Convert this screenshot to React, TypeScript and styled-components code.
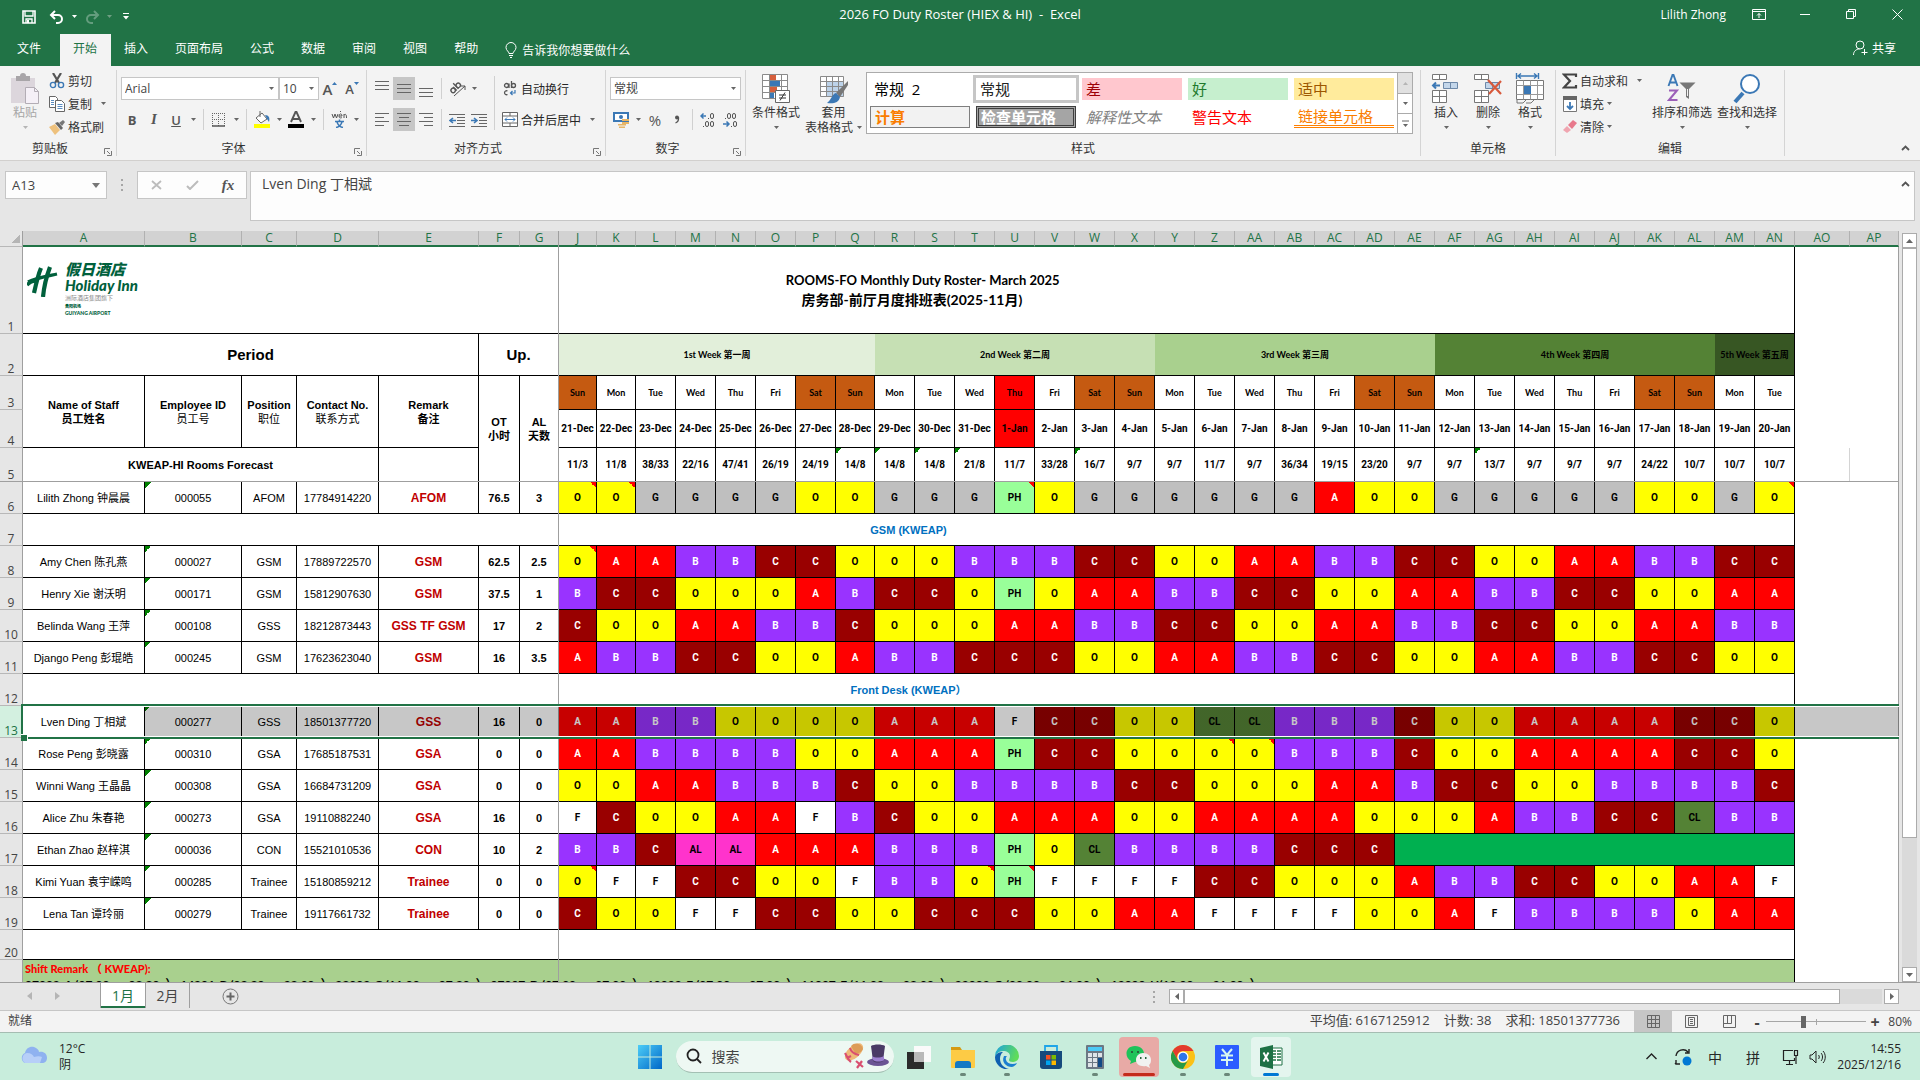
import React from "react";
import styled, { createGlobalStyle, css } from "styled-components";

const UI = '"Open Sans", "Noto Sans CJK SC", sans-serif';
const SHEET = '"Liberation Sans", "Noto Sans CJK SC", sans-serif';
const ROSTER = 'Lato, "Noto Sans CJK SC", sans-serif';
const SHIFT = 'Roboto, "Noto Sans CJK SC", sans-serif';
const GREEN = "#217346";

const GlobalStyle = createGlobalStyle`
  *, *::before, *::after { box-sizing: border-box; }
  body { margin: 0; overflow: hidden; font-family: ${UI}; font-size: 12px; color: #262626; }
  button, input, select, textarea { font: inherit; color: inherit; margin: 0; padding: 0; border: 0; background: none; border-radius: 0; }
  button { display: inline-flex; align-items: center; justify-content: center; white-space: nowrap; }
  svg { display: block; flex: none; }
`;

const Screen = styled.div`
  display: flex;
  flex-direction: column;
  height: 100vh;
  background: #e6e6e6;
`;

/* ---------- title bar and tabs ---------- */

const TitleBar = styled.header`
  display: grid;
  grid-template-columns: 1fr auto 1fr;
  align-items: center;
  height: 34px;
  padding-bottom: 6px;
  background: ${GREEN};
  color: #fff;
`;
const QuickAccess = styled.div`
  display: flex;
  align-items: center;
  padding: 5px 0 0 18px;
`;
const QuickButton = styled.button<{ $w: number; $faded?: boolean }>`
  width: ${(p) => p.$w}px;
  height: 22px;
  opacity: ${(p) => (p.$faded ? 0.3 : 1)};
`;
const DocTitle = styled.h1`
  margin: 0;
  font-size: 13px;
  font-weight: 400;
  white-space: pre;
`;
const WindowControls = styled.div`
  display: flex;
  align-items: center;
  justify-content: flex-end;
`;
const Account = styled.button`
  margin-right: 10px;
`;
const WindowButton = styled.button`
  width: 46px;
  height: 28px;
`;
const TabBar = styled.nav`
  display: flex;
  align-items: stretch;
  height: 32px;
  background: ${GREEN};
  color: #fff;
`;
const Tab = styled.button<{ $active?: boolean; $file?: boolean }>`
  padding: ${(p) => (p.$file ? "0 19px 2px 17px" : "0 14px 2px 13px")};
  line-height: 16px;
  ${(p) => p.$active && css`background: #f3f3f3; color: ${GREEN};`}
`;
const TellMe = styled.button`
  gap: 5px;
  margin-left: 13px;
`;
const Share = styled.button`
  gap: 4px;
  margin-left: auto;
  padding: 0 24px 4px 0;
`;

/* ---------- ribbon ---------- */

const Ribbon = styled.section`
  display: flex;
  padding: 4px 0;
  background: #f3f3f3;
  border-bottom: 1px solid #d2d0ce;
`;
const Group = styled.div<{ $w: number }>`
  display: flex;
  flex-direction: column;
  width: ${(p) => p.$w}px;
  height: 86px;
  border-right: 1px solid #d4d4d4;
`;
const GroupBody = styled.div<{ $pad?: number }>`
  display: flex;
  height: 72px;
  padding-left: ${(p) => p.$pad ?? 4}px;
`;
const GroupFooter = styled.div`
  display: flex;
  align-items: center;
  height: 14px;
  line-height: 14px;
  text-align: center;
  color: #333;
`;
const GroupLabel = styled.span`
  flex: 1;
`;
const Launcher = styled.button`
  width: 16px;
  height: 14px;
  align-items: flex-end;
`;
const ToolRows = styled.div`
  display: flex;
  flex-direction: column;
  gap: 8px;
  padding-top: 7px;
`;
const ToolRow = styled.div`
  display: flex;
  align-items: center;
  height: 23px;
`;
const Tool = styled.button<{ $w?: number; $on?: boolean }>`
  width: ${(p) => p.$w ?? 22}px;
  height: 23px;
  background: ${(p) => (p.$on ? "#c6c6c6" : "transparent")};
  color: #555;
`;
const TextTool = styled.button`
  height: 23px;
  justify-content: flex-start;
`;
const IconSlot = styled.span<{ $w?: number }>`
  display: flex;
  align-items: center;
  justify-content: center;
  width: ${(p) => p.$w ?? 22}px;
`;
const ArrowSlot = styled.span`
  display: flex;
  padding-left: 9px;
`;
const Sep = styled.i<{ $h?: number }>`
  width: 1px;
  height: ${(p) => p.$h ?? 21}px;
  margin: 0 4px;
  background: #d0d0d0;
`;
const TallSep = styled(Sep)`
  margin-top: 6px;
`;
const SmallTools = styled.div`
  display: flex;
  flex-direction: column;
  align-items: flex-start;
  gap: 2px;
`;
const SmallTool = styled.button`
  height: 21px;
  color: #333;
`;
const BigTool = styled.button<{ $w: number; $disabled?: boolean }>`
  flex-direction: column;
  justify-content: flex-start;
  width: ${(p) => p.$w}px;
  padding-top: 3px;
  color: ${(p) => (p.$disabled ? "#a6a6a6" : "#333")};
`;
const BigIcon = styled.span`
  display: flex;
  align-items: flex-start;
  height: 32px;
`;
const BigLine = styled.span`
  display: flex;
  align-items: center;
  gap: 4px;
  height: 15px;
  line-height: 15px;
`;
const ComboBox = styled.label<{ $w: number }>`
  position: relative;
  display: flex;
  align-items: center;
  width: ${(p) => p.$w}px;
  height: 23px;
  background: #fff;
  border: 1px solid #c6c6c6;
  select {
    appearance: none;
    width: 100%;
    padding-left: 3px;
    color: #444;
    outline: 0;
  }
  svg {
    position: absolute;
    right: 4px;
    pointer-events: none;
  }
`;
const Glyph = styled.span<{ $size?: number; $weight?: number; $style?: "bold" | "italic" | "underline" }>`
  font-size: ${(p) => p.$size ?? 13}px;
  font-weight: ${(p) => p.$weight ?? 700};
  font-style: ${(p) => (p.$style === "italic" ? "italic" : "normal")};
  font-family: ${(p) => (p.$style === "italic" ? '"Liberation Serif", serif' : UI)};
  text-decoration: ${(p) => (p.$style === "underline" ? "underline" : "none")};
`;
const Gallery = styled.div`
  display: flex;
  align-self: flex-start;
  height: 62px;
  margin: 2px 0 0 2px;
  border: 1px solid #ababab;
  background: #fff;
`;
const GalleryGrid = styled.div`
  display: grid;
  grid-template-columns: repeat(5, 100px);
  grid-auto-rows: 22px;
  gap: 6px;
  padding: 5px 3px;
`;
const StyleChip = styled.button<{ $fg: string; $bg?: string; $variant?: string }>`
  justify-content: flex-start;
  padding-left: 4px;
  font-size: 15px;
  line-height: 18px;
  color: ${(p) => p.$fg};
  background: ${(p) => p.$bg ?? "transparent"};
  ${(p) => p.$variant === "selected" && css`outline: 3px solid #c6c6c6;`}
  ${(p) => p.$variant === "calc" && css`border: 1px solid #7f7f7f; font-weight: 700;`}
  ${(p) => p.$variant === "check" && css`border: 3px double #3f3f3f; font-weight: 700; padding-left: 2px;`}
  ${(p) => p.$variant === "note" && css`font-style: italic;`}
  ${(p) => p.$variant === "link" && css`border-bottom: 3px double #ff8001;`}
`;
const GallerySteps = styled.div`
  display: grid;
  grid-template-rows: 1fr 1fr 1fr;
  width: 15px;
  border-left: 1px solid #ababab;
`;
const StepButton = styled.button<{ $off?: boolean }>`
  background: ${(p) => (p.$off ? "#e1e1e1" : "#fff")};
  & + & { border-top: 1px solid #ababab; }
`;
const Collapse = styled.button`
  align-self: flex-end;
  margin-left: auto;
  width: 30px;
  height: 16px;
`;

/* ---------- formula bar ---------- */

const FormulaBar = styled.section`
  display: flex;
  align-items: flex-start;
  padding: 10px 5px;
  background: #e6e6e6;
`;
const NameBox = styled.label`
  position: relative;
  display: flex;
  align-items: center;
  width: 102px;
  height: 28px;
  background: #fdfdfd;
  border: 1px solid #c6c6c6;
  input { width: 80px; padding-left: 6px; font-size: 13px; color: #444; }
  svg { position: absolute; right: 6px; }
`;
const Grip = styled.span`
  display: grid;
  gap: 3px;
  i { width: 2px; height: 2px; background: #a6a6a6; }
`;
const GripSlot = styled.span`
  display: flex;
  align-items: center;
  justify-content: center;
  width: 30px;
  height: 28px;
`;
const EntryButtons = styled.div`
  display: grid;
  grid-template-columns: repeat(3, 36px);
  width: 110px;
  height: 28px;
  margin-right: 3px;
  background: #fdfdfd;
  border: 1px solid #c6c6c6;
  color: #555;
`;
const FormulaField = styled.div`
  display: flex;
  flex: 1;
  height: 50px;
  background: #fdfdfd;
  border: 1px solid #c6c6c6;
  textarea {
    flex: 1;
    resize: none;
    outline: 0;
    padding: 2px 11px;
    font-size: 14px;
    line-height: 20px;
    color: #444;
  }
  button { width: 18px; height: 24px; }
`;

/* ---------- worksheet ---------- */

const SheetArea = styled.main`
  display: flex;
  flex: 1;
  min-height: 0;
`;
const SheetView = styled.div`
  position: relative;
  flex: 1;
  overflow: hidden;
  background: #fff;
`;
const FreezeColumn = styled.i`
  position: absolute;
  top: 0;
  bottom: 0;
  left: 558px;
  width: 1px;
  background: #9f9f9f;
`;
const FreezeRow = styled.i`
  position: absolute;
  left: 0;
  right: 0;
  top: 250px;
  height: 1px;
  background: #9f9f9f;
`;
const Selection = styled.div`
  position: absolute;
  top: 473px;
  left: 21px;
  right: 0;
  height: 35px;
  border: 2px solid ${GREEN};
  border-right: 0;
  box-shadow: inset 0 1px #fff, inset 0 -1px #fff;
  background: linear-gradient(to right, transparent 122px, rgba(0, 0, 0, 0.22) 122px);
  pointer-events: none;
`;
const FillHandle = styled.i`
  position: absolute;
  left: -2px;
  bottom: -4px;
  width: 7px;
  height: 7px;
  border: solid #fff;
  border-width: 1px 1px 0 0;
  background: ${GREEN};
`;
const Grid = styled.table`
  width: 100%;
  table-layout: fixed;
  border-collapse: separate;
  border-spacing: 0;
  font-family: ${SHEET};
  font-size: 11px;
  line-height: 14px;
  color: #000;
`;
const ColHead = styled.th`
  height: 16px;
  padding: 0;
  font: 400 12px/14px ${UI};
  color: ${GREEN};
  background: #d2d2d2;
  border-right: 1px solid #b1b1b1;
  border-bottom: 2px solid ${GREEN};
`;
const Corner = styled.th`
  height: 16px;
  padding: 0;
  background: linear-gradient(to bottom right, transparent 50%, #b5b5b5 50%) 11px 3px / 9px 9px no-repeat #e6e6e6;
  border-right: 1px solid #9f9f9f;
  border-bottom: 1px solid #b8b8b8;
`;
const RowHead = styled.th<{ $h: number; $on?: boolean }>`
  height: ${(p) => p.$h}px;
  padding: 0;
  vertical-align: bottom;
  font: 400 12px/12px ${UI};
  color: ${(p) => (p.$on ? GREEN : "#444")};
  background: ${(p) => (p.$on ? "#d3f0e0" : "#e6e6e6")};
  border-right: 1px solid #9f9f9f;
  border-bottom: 1px solid #b8b8b8;
`;
const Cell = styled.td<{ $bold?: boolean; $mark?: "error" | "note"; $bg?: string }>`
  padding: 0;
  text-align: center;
  vertical-align: middle;
  white-space: nowrap;
  font-weight: ${(p) => (p.$bold ? 700 : 400)};
  background-color: ${(p) => p.$bg ?? "#fff"};
  border-right: 1px solid #000;
  border-bottom: 1px solid #000;
  ${(p) => p.$mark === "error" && css`
    background-image: linear-gradient(to bottom right, #008000 50%, transparent 50%);
    background-size: 6px 6px;
    background-repeat: no-repeat;
  `}
  ${(p) => p.$mark === "note" && css`
    background-image: linear-gradient(to bottom left, #ff0000 50%, transparent 50%);
    background-size: 6px 6px;
    background-position: top right;
    background-repeat: no-repeat;
  `}
`;
const Plain = styled.span`
  display: block;
  font-weight: 400;
`;
const BigHeadCell = styled(Cell)`
  font-size: 15px;
  font-weight: 700;
`;
const RemarkCell = styled(Cell)`
  font-size: 12px;
  font-weight: 700;
  color: #c00000;
`;
const WeekCell = styled(Cell)<{ $last?: boolean }>`
  font: 700 9px/14px ${ROSTER};
  border-right-width: ${(p) => (p.$last ? 1 : 0)}px;
`;
const DayCell = styled(Cell)`
  font: 700 9px/14px ${ROSTER};
`;
const DateCell = styled(Cell)`
  font: 700 10px/14px ${SHIFT};
`;
const ShiftCell = styled(Cell)<{ $fg: string }>`
  font: 700 10px/14px ${SHIFT};
  color: ${(p) => p.$fg};
`;
const SectionCell = styled(Cell)`
  font-weight: 700;
  color: #0070c0;
`;
const OutsideCell = styled.td<{ $line?: boolean; $edge?: boolean }>`
  padding: 0;
  border-right: 1px solid ${(p) => (p.$edge ? "#9f9f9f" : p.$line ? "#d4d4d4" : "transparent")};
`;
const TitleCell = styled(Cell)`
  position: relative;
  white-space: pre;
  font: 700 14px/20px ${ROSTER};
`;
const TitleLine = styled.span<{ $size: number }>`
  display: block;
  font-size: ${(p) => p.$size}px;
`;
const NotesCell = styled(Cell)`
  height: 60px;
  vertical-align: top;
  text-align: left;
  padding: 1px 2px;
  font: 700 12px/16px ${ROSTER};
  white-space: pre;
  strong { display: block; font-size: 11px; color: #ff0000; }
`;
const Logo = styled.figure`
  position: absolute;
  left: 4px;
  top: 14px;
  display: flex;
  gap: 7px;
  margin: 0;
  color: #00603c;
  text-align: left;
  svg { margin-top: 5px; }
`;
const LogoText = styled.figcaption`
  display: grid;
  font-weight: 900;
`;
const LogoLine = styled.span<{ $size: number; $h: number; $tone?: string; $plain?: boolean }>`
  font-size: ${(p) => p.$size}px;
  line-height: ${(p) => p.$h}px;
  color: ${(p) => p.$tone ?? "inherit"};
  font-style: ${(p) => (p.$plain ? "normal" : "italic")};
  font-weight: ${(p) => (p.$tone ? 400 : 900)};
`;
const VScroll = styled.div`
  display: flex;
  flex-direction: column;
  width: 21px;
  padding: 2px 3px 0;
`;
const ScrollButton = styled.button`
  flex: none;
  width: 15px;
  height: 15px;
  background: #fff;
  border: 1px solid #ababab;
`;
const VTrack = styled.div`
  flex: 1;
  background: #dadada;
`;
const VThumb = styled.div`
  height: 82%;
  background: #fff;
  border: 1px solid #ababab;
`;

/* ---------- sheet tabs and status bar ---------- */

const SheetTabs = styled.nav`
  display: flex;
  align-items: stretch;
  height: 28px;
  border-top: 1px solid #9f9f9f;
  background: #e6e6e6;
`;
const TabNav = styled.div`
  display: flex;
  width: 100px;
  padding: 0 28px 2px 15px;
  button { width: 28px; }
`;
const SheetTab = styled.button<{ $active?: boolean }>`
  width: 46px;
  height: 25px;
  font-size: 14px;
  line-height: 20px;
  color: ${(p) => (p.$active ? GREEN : "#444")};
  ${(p) =>
    p.$active
      ? css`background: #fff; border: solid #9f9f9f; border-width: 0 1px; box-shadow: inset 0 -2px ${GREEN};`
      : css`border-right: 1px solid #9f9f9f; width: 44px;`}
`;
const AddSheet = styled.button`
  margin-left: 32px;
`;
const HScroll = styled.div`
  display: flex;
  align-items: center;
  flex: 0 0 760px;
  margin: 0 21px 0 auto;
`;
const HTrack = styled.div`
  flex: 1;
  height: 15px;
  margin-right: 2px;
  background: #dadada;
`;
const HThumb = styled.div`
  width: 94%;
  height: 15px;
  background: #fff;
  border: 1px solid #ababab;
`;
const StatusBar = styled.footer`
  display: flex;
  align-items: stretch;
  height: 22px;
  padding-right: 8px;
  border-top: 1px solid #c6c6c6;
  background: #f3f3f3;
  line-height: 19px;
  color: #444;
`;
const Ready = styled.span`
  flex: 1;
  padding-left: 8px;
`;
const Stat = styled.span`
  margin-right: 14px;
  font-size: 13px;
`;
const ViewButton = styled.button<{ $on?: boolean }>`
  width: 38px;
  background: ${(p) => (p.$on ? "#c6c6c6" : "transparent")};
`;
const Zoom = styled.div`
  display: flex;
  align-items: center;
  gap: 2px;
  margin-left: 2px;
  button { width: 14px; font-size: 16px; font-weight: 700; line-height: 16px; }
  output { width: 28px; text-align: right; }
  input {
    appearance: none;
    width: 100px;
    height: 12px;
    background: linear-gradient(#a6a6a6, #a6a6a6) center / 100% 1px no-repeat, linear-gradient(#a6a6a6, #a6a6a6) center / 1px 6px no-repeat;
  }
  input::-webkit-slider-thumb {
    appearance: none;
    width: 5px;
    height: 12px;
    background: #666;
  }
`;

/* ---------- taskbar ---------- */

const Taskbar = styled.footer`
  display: grid;
  grid-template-columns: 1fr auto 1fr;
  align-items: center;
  height: 48px;
  border-top: 1px solid #a5bdb2;
  background: #c8eddc;
`;
const Weather = styled.button`
  justify-self: start;
  gap: 9px;
  padding-left: 22px;
  line-height: 16px;
  text-align: left;
`;
const Cloud = styled.span`
  padding-bottom: 4px;
  margin-left: -6px;
`;
const Stack = styled.span`
  display: grid;
`;
const Apps = styled.div`
  display: flex;
  align-items: center;
  gap: 4px;
`;
const Search = styled.label`
  display: flex;
  align-items: center;
  width: 218px;
  height: 32px;
  margin: 0 1px 0 2px;
  padding: 0 4px 0 10px;
  border-radius: 16px;
  border-bottom: 1px solid #a3c0b3;
  background: #eef8f3;
  input { flex: 1; min-width: 0; padding-left: 10px; font-size: 14px; outline: 0; }
  input::placeholder { color: #444; opacity: 1; }
`;
const AppButton = styled.button<{ $tone?: string; $bar?: string }>`
  position: relative;
  width: 40px;
  height: 40px;
  border-radius: 4px;
  background: ${(p) => p.$tone ?? "transparent"};
  &::after {
    content: "";
    position: absolute;
    bottom: 1px;
    width: ${(p) => (p.$bar === "#c42b1c" ? 32 : p.$bar === "#0078d4" ? 16 : 6)}px;
    height: 3px;
    border-radius: 2px;
    background: ${(p) => p.$bar ?? "transparent"};
  }
`;
const Tray = styled.div`
  display: flex;
  align-items: center;
  justify-self: end;
  padding-right: 19px;
`;
const TrayButton = styled.button<{ $w: number }>`
  width: ${(p) => p.$w}px;
  height: 40px;
  font-size: 14px;
`;
const Clock = styled.time`
  display: grid;
  width: 72px;
  line-height: 16px;
  text-align: right;
`;

/* ---------- icons ---------- */

type Svg = { w: number; h: number; children: React.ReactNode };
const Draw = ({ w, h, children }: Svg) => (
  <svg width={w} height={h} viewBox={`0 0 ${w} ${h}`} fill="none" aria-hidden="true">
    {children}
  </svg>
);
const Arrow = ({ color = "#666" }: { color?: string }) => (
  <Draw w={5} h={3}><path d="M0 0h5L2.5 3z" fill={color} /></Draw>
);
const Lines = ({ rows, at }: { rows: [number, number][]; at: number }) => (
  <Draw w={16} h={16}>
    {rows.map(([x, w], i) => <path key={i} d={`M${x} ${at + i * 4 + 0.5}h${w}`} stroke="#666" />)}
  </Draw>
);
const Indent = ({ flip }: { flip?: boolean }) => (
  <Draw w={16} h={14}>
    <path d="M0 1.5h16M8 4.5h8M8 7.5h8M8 10.5h8M0 13.5h16" stroke="#666" />
    <path d={flip ? "M0 7.5h5M3 5l3 2.5L3 10" : "M7 7.5H1M4 5 1 7.5 4 10"} stroke="#3b78b5" strokeWidth="1.6" />
  </Draw>
);
const CellsIcon = ({ kind }: { kind: "insert" | "delete" }) => (
  <Draw w={30} h={30}>
    <path d="M1.500 1.500h14v5h-14zM8.500 1.500v5M1.500 17.500h14v12h-14zM8.500 17v12M1.500 23.500h14" stroke="#777" fill="#fff" />
    <path d="M12.500 9.500h14v6h-14zM19.500 9.500v6" stroke="#6d88a8" fill="#c3d6ea" />
    {kind === "insert" ? (
      <path d="M9 12.500H2M5 9.500l-3 3 3 3" stroke="#3b78b5" strokeWidth="2" />
    ) : (
      <path d="M15 7l13 14M28 8 16 21" stroke="#d8593b" strokeWidth="2.200" />
    )}
  </Draw>
);
const Decimal = ({ up }: { up?: boolean }) => (
  <Draw w={16} h={16}>
    <path d={up ? "M6 4H1M3.500 1.500 1 4l2.500 2.500" : "M1 12h6M4.500 9.500 7 12l-2.500 2.500"} stroke="#3b78b5" strokeWidth="1.500" />
    <g stroke="#555">
      {up ? (
        <><rect x="10.500" y="1.500" width="3" height="5" rx="1.500" /><path d="M8 6.500h1M3 14.500h1" /><rect x="5.500" y="9.500" width="3" height="5" rx="1.500" /><rect x="10.500" y="9.500" width="3" height="5" rx="1.500" /></>
      ) : (
        <><path d="M3 6.500h1M9 14.500h1" /><rect x="5.500" y="1.500" width="3" height="5" rx="1.500" /><rect x="10.500" y="1.500" width="3" height="5" rx="1.500" /><rect x="11.500" y="9.500" width="3" height="5" rx="1.500" /></>
      )}
    </g>
  </Draw>
);
const LauncherIcon = () => (
  <Draw w={8} h={8}><path d="M.5 6V.5H6M3 3l3 3M7.500 3v4.500H3" stroke="#777" /></Draw>
);
const Chevron = ({ color = "#555" }: { color?: string }) => (
  <Draw w={9} h={6}><path d="M1 5l3.500-3.500L8 5" stroke={color} strokeWidth="1.800" /></Draw>
);

/* ---------- roster data ---------- */

const SHIFTS: Record<string, [string, string]> = {
  O: ["#ffff00", "#000"], A: ["#ff0000", "#fff"], B: ["#9933ff", "#fff"], C: ["#990000", "#fff"],
  G: ["#bfbfbf", "#000"], F: ["#ffffff", "#000"], PH: ["#99ff99", "#000"], CL: ["#548235", "#000"], AL: ["#ff33cc", "#000"],
};
const DAY_COLS = "J K L M N O P Q R S T U V W X Y Z AA AB AC AD AE AF AG AH AI AJ AK AL AM AN".split(" ");
const COLS = ["A", "B", "C", "D", "E", "F", "G", ...DAY_COLS, "AO", "AP"];
const WIDTHS = [122, 97, 55, 82, 100, 41, 39, 38, 39, 40, 40, 40, 40, 40, 39, ...Array(23).fill(40), 55];
const WEEKDAYS = ["Sun", "Mon", "Tue", "Wed", "Thu", "Fri", "Sat"];
const ROOMS = "11/3 11/8 38/33 22/16 47/41 26/19 24/19 14/8 14/8 14/8 21/8 11/7 33/28 16/7 9/7 9/7 11/7 9/7 36/34 19/15 23/20 9/7 9/7 13/7 9/7 9/7 9/7 24/22 10/7 10/7 10/7".split(" ");
const FLAGGED = ["Q", "R", "S", "T", "W", "AG"];
const WEEKS: [string, number, string][] = [
  ["1st Week 第一周", 8, "#e2efda"], ["2nd Week 第二周", 7, "#c6e0b4"], ["3rd Week 第三周", 7, "#a9d08e"],
  ["4th Week 第四周", 7, "#548235"], ["5th Week 第五周", 2, "#375623"],
];
type Staff = { row: number; name: string; id: string; pos: string; tel: string; remark: string; ot: string; al: string; plan: string; notes?: string[] };
type Line = Staff | { row: number; section: string };
const LINES: Line[] = [
  { row: 6, name: "Lilith Zhong 钟晨晨", id: "000055", pos: "AFOM", tel: "17784914220", remark: "AFOM", ot: "76.5", al: "3", plan: "O O G G G G O O G G G PH O G G G G G G A O O G G G G G O O G O", notes: ["J", "K", "U", "AN"] },
  { row: 7, section: "GSM (KWEAP)" },
  { row: 8, name: "Amy Chen 陈孔燕", id: "000027", pos: "GSM", tel: "17889722570", remark: "GSM", ot: "62.5", al: "2.5", plan: "O A A B B C C O O O B B B C C O O A A B B C C O O A A B B C C", notes: ["J"] },
  { row: 9, name: "Henry Xie 谢沃明", id: "000171", pos: "GSM", tel: "15812907630", remark: "GSM", ot: "37.5", al: "1", plan: "B C C O O O A B C C O PH O A A B B C C O O A A B B C C O O A A" },
  { row: 10, name: "Belinda Wang 王萍", id: "000108", pos: "GSS", tel: "18212873443", remark: "GSS TF GSM", ot: "17", al: "2", plan: "C O O A A B B C O O O A A B B C C O O A A B B C C O O A A B B" },
  { row: 11, name: "Django Peng 彭琨皓", id: "000245", pos: "GSM", tel: "17623623040", remark: "GSM", ot: "16", al: "3.5", plan: "A B B C C O O A B B C C C O O A A B B C C O O A A B B C C O O" },
  { row: 12, section: "Front Desk (KWEAP）" },
  { row: 13, name: "Lven Ding 丁相斌", id: "000277", pos: "GSS", tel: "18501377720", remark: "GSS", ot: "16", al: "0", plan: "A A B B O O O O A A A F C C O O CL CL B B B C O O A A A A C C O" },
  { row: 14, name: "Rose Peng 彭晓露", id: "000310", pos: "GSA", tel: "17685187531", remark: "GSA", ot: "0", al: "0", plan: "A A B B B B O O A A A PH C C O O O O B B B C O O A A A A C C O", notes: ["Z", "AA"] },
  { row: 15, name: "Winni Wang 王晶晶", id: "000308", pos: "GSA", tel: "16684731209", remark: "GSA", ot: "0", al: "0", plan: "O O A A B B B C O O B B B B C C O O O A A B C C O O B B B B C" },
  { row: 16, name: "Alice Zhu 朱春艳", id: "000273", pos: "GSA", tel: "19110882240", remark: "GSA", ot: "16", al: "0", plan: "F C O O A A F B C O O A A A O O A A A A O O O A B B C C CL B B" },
  { row: 17, name: "Ethan Zhao 赵梓淇", id: "000036", pos: "CON", tel: "15521010536", remark: "CON", ot: "10", al: "2", plan: "B B C AL AL A A A B B B PH O CL B B B B C C C" },
  { row: 18, name: "Kimi Yuan 袁宇嵘鸣", id: "000285", pos: "Trainee", tel: "15180859212", remark: "Trainee", ot: "0", al: "0", plan: "O F F C C O O F B B O PH F F F F C C O O O A B B C C O O A A F", notes: ["J", "T", "U"] },
  { row: 19, name: "Lena Tan 谭玲丽", id: "000279", pos: "Trainee", tel: "19117661732", remark: "Trainee", ot: "0", al: "0", plan: "C O O F F C C O O C C C O O A A F F F F O O A F B B B B O A A" },
];
const SHIFT_TIMES = [
  "07002-A (07:00——03:30  ）", "14201-B (03:30——23:00  ）", "23002-C (11:00——07:30  ）", "07007-D (07:00——07:00  ）",
  "10002-E (07:00——07:00  ）", "11007-F (11:00——08:00  ）", "22002-G (00:00——06:00  ）", "12000-H(12:00——21:00  ）",
];

const weekday = (i: number) => WEEKDAYS[i % 7];
const dateOf = (i: number) => (i < 11 ? `${21 + i}-Dec` : `${i - 10}-Jan`);
const dayTone = (i: number) => (DAY_COLS[i] === "U" ? "#ff0000" : i % 7 === 0 || i % 7 === 6 ? "#c55a11" : undefined);

const Outside = ({ line }: { line?: boolean }) => (
  <>
    <OutsideCell $line={line} />
    <OutsideCell $edge />
  </>
);

const StaffRow = ({ s }: { s: Staff }) => {
  const plan = s.plan.split(" ");
  return (
    <tr aria-selected={s.row === 13}>
      <RowHead scope="row" $h={32} $on={s.row === 13}>{s.row}</RowHead>
      <Cell>{s.name}</Cell>
      <Cell $mark="error">{s.id}</Cell>
      <Cell>{s.pos}</Cell>
      <Cell>{s.tel}</Cell>
      <RemarkCell>{s.remark}</RemarkCell>
      <Cell $bold>{s.ot}</Cell>
      <Cell $bold>{s.al}</Cell>
      {plan.map((code, i) => (
        <ShiftCell key={i} $bg={SHIFTS[code][0]} $fg={SHIFTS[code][1]} $mark={s.notes?.includes(DAY_COLS[i]) ? "note" : undefined}>
          {code}
        </ShiftCell>
      ))}
      {plan.length < 31 && <Cell colSpan={31 - plan.length} $bg="#00b050" />}
      <Outside />
    </tr>
  );
};

const Worksheet = () => (
  <SheetView>
    <Grid>
      <colgroup>
        <col style={{ width: 23 }} />
        {WIDTHS.map((w, i) => <col key={i} style={{ width: w }} />)}
        <col />
      </colgroup>
      <thead>
        <tr>
          <Corner />
          {COLS.map((c) => <ColHead key={c} scope="col">{c}</ColHead>)}
        </tr>
      </thead>
      <tbody>
        <tr>
          <RowHead scope="row" $h={87}>1</RowHead>
          <TitleCell colSpan={38}>
            <Logo>
              <Draw w={31} h={31}>
                <path d="M1 16c8-4 20-6 29-8" stroke="#00603c" strokeWidth="3.200" />
                <path d="M0 19c2-2 6-4 9-4" stroke="#00603c" strokeWidth="3.600" />
                <path d="M14 2C11 9 9 18 7 27M23 1c-3 8-6 19-7 30" stroke="#00603c" strokeWidth="4.200" />
              </Draw>
              <LogoText>
                <LogoLine $size={15} $h={16}>假日酒店</LogoLine>
                <LogoLine $size={15} $h={17}>Holiday Inn</LogoLine>
                <LogoLine $size={6} $h={8} $tone="#8a8a8a" $plain>洲际酒店集团旗下</LogoLine>
                <LogoLine $size={4} $h={9} $plain>贵阳机场</LogoLine>
                <LogoLine $size={5} $h={5} $plain>GUIYANG AIRPORT</LogoLine>
              </LogoText>
            </Logo>
            <TitleLine $size={13}>{"         ROOMS-FO Monthly Duty Roster- March 2025"}</TitleLine>
            <TitleLine $size={14}>{"  房务部-前厅月度排班表(2025-11月)"}</TitleLine>
          </TitleCell>
          <Outside />
        </tr>
        <tr>
          <RowHead scope="row" $h={42}>2</RowHead>
          <BigHeadCell colSpan={5}>Period</BigHeadCell>
          <BigHeadCell colSpan={2}>Up.</BigHeadCell>
          {WEEKS.map(([label, span, bg], i) => (
            <WeekCell key={label} colSpan={span} $bg={bg} $last={i === 4}>{label}</WeekCell>
          ))}
          <Outside />
        </tr>
        <tr>
          <RowHead scope="row" $h={34}>3</RowHead>
          <Cell rowSpan={2} $bold>Name of Staff<br />员工姓名</Cell>
          <Cell rowSpan={2} $bold>Employee ID<Plain>员工号</Plain></Cell>
          <Cell rowSpan={2} $bold>Position<Plain>职位</Plain></Cell>
          <Cell rowSpan={2} $bold>Contact No.<Plain>联系方式</Plain></Cell>
          <Cell rowSpan={2} $bold>Remark<br />备注</Cell>
          <Cell rowSpan={3} $bold>OT<br />小时</Cell>
          <Cell rowSpan={3} $bold>AL<br />天数</Cell>
          {DAY_COLS.map((c, i) => <DayCell key={c} $bg={dayTone(i)}>{weekday(i)}</DayCell>)}
          <Outside />
        </tr>
        <tr>
          <RowHead scope="row" $h={38}>4</RowHead>
          {DAY_COLS.map((c, i) => <DateCell key={c} $bg={c === "U" ? "#ff0000" : undefined}>{dateOf(i)}</DateCell>)}
          <Outside />
        </tr>
        <tr>
          <RowHead scope="row" $h={34}>5</RowHead>
          <Cell colSpan={4} $bold>KWEAP-HI Rooms Forecast</Cell>
          <Cell />
          {DAY_COLS.map((c, i) => <DateCell key={c} $mark={FLAGGED.includes(c) ? "error" : undefined}>{ROOMS[i]}</DateCell>)}
          <Outside line />
        </tr>
        {LINES.map((l) =>
          "section" in l ? (
            <tr key={l.row}>
              <RowHead scope="row" $h={32}>{l.row}</RowHead>
              <SectionCell colSpan={38}>{l.section}</SectionCell>
              <Outside />
            </tr>
          ) : (
            <StaffRow key={l.row} s={l} />
          ),
        )}
        <tr>
          <RowHead scope="row" $h={30}>20</RowHead>
          <Cell colSpan={38} />
          <Outside />
        </tr>
        <tr>
          <RowHead scope="row" $h={60} />
          <NotesCell colSpan={38} $bg="#a9d08e">
            <strong>{"Shift Remark （ KWEAP):"}</strong>
            {SHIFT_TIMES.join(" ")}
          </NotesCell>
          <Outside />
        </tr>
      </tbody>
    </Grid>
    <FreezeColumn />
    <FreezeRow />
    <Selection><FillHandle /></Selection>
  </SheetView>
);

const RibbonBar = () => (
  <Ribbon>
    <Group $w={117}>
      <GroupBody>
        <BigTool $w={42} $disabled>
          <BigIcon>
            <Draw w={30} h={31}>
              <path d="M1 5h24v25H1z" fill="#dcd6dc" />
              <path d="M6 3h4a3 3 0 0 1 6 0h4v5H6z" fill="#a8a5a8" />
              <path d="M15.500 14.500h9l4 4v12h-13z" fill="#f5f0f7" stroke="#b3adb5" />
              <path d="M24.500 14.500v4h4" stroke="#b3adb5" />
            </Draw>
          </BigIcon>
          <BigLine>粘贴</BigLine>
          <BigLine><Arrow color="#b5b5b5" /></BigLine>
        </BigTool>
        <SmallTools>
          <SmallTool>
            <IconSlot>
              <Draw w={16} h={16}>
                <path d="M4 0l6 10M12 0 6 10" stroke="#555" strokeWidth="2.200" />
                <circle cx="4" cy="12" r="2.600" stroke="#3b78b5" strokeWidth="1.400" /><circle cx="12" cy="12" r="2.600" stroke="#3b78b5" strokeWidth="1.400" />
              </Draw>
            </IconSlot>
            剪切
          </SmallTool>
          <SmallTool>
            <IconSlot>
              <Draw w={16} h={16}>
                <path d="M.5.500h6l2 2v9h-8z" fill="#fff" stroke="#666" /><path d="M6.500 4.500h6l3 3v8h-9z" fill="#fff" stroke="#666" />
                <path d="M2 4.500h3M2 6.500h3M2 8.500h3M8.500 8.500h5M8.500 10.500h5M8.500 12.500h5" stroke="#5b8cc0" />
              </Draw>
            </IconSlot>
            复制<ArrowSlot><Arrow /></ArrowSlot>
          </SmallTool>
          <SmallTool>
            <IconSlot>
              <Draw w={16} h={16}>
                <path d="M0 8l6-3 5 6-5 5z" fill="#eec17d" /><path d="M6 4l3-1 5 6-2 2z" fill="#666" /><path d="M10 4l4-3 2 2-3 4z" fill="#777" />
              </Draw>
            </IconSlot>
            格式刷
          </SmallTool>
        </SmallTools>
      </GroupBody>
      <GroupFooter><GroupLabel>剪贴板</GroupLabel><Launcher aria-label="剪贴板选项"><LauncherIcon /></Launcher></GroupFooter>
    </Group>

    <Group $w={250}>
      <GroupBody>
        <ToolRows>
          <ToolRow>
            <ComboBox $w={158}><select aria-label="字体"><option>Arial</option></select><Arrow /></ComboBox>
            <ComboBox $w={40}><select aria-label="字号"><option>10</option></select><Arrow /></ComboBox>
            <Tool aria-label="增大字号"><Glyph $size={15} $weight={600}>A</Glyph><Draw w={5} h={14}><path d="M0 3h5L2.500 0z" fill="#3b78b5" /></Draw></Tool>
            <Tool aria-label="减小字号"><Glyph $size={13} $weight={600}>A</Glyph><Draw w={5} h={14}><path d="M0 0h5L2.500 3z" fill="#3b78b5" /></Draw></Tool>
          </ToolRow>
          <ToolRow>
            <Tool><Glyph $style="bold">B</Glyph></Tool>
            <Tool><Glyph $style="italic" $size={15} $weight={600}>I</Glyph></Tool>
            <Tool><Glyph $style="underline" $weight={600}>U</Glyph></Tool>
            <Tool $w={12} aria-label="下划线选项"><Arrow /></Tool>
            <Sep />
            <Tool aria-label="边框">
              <Draw w={14} h={14}><path d="M.5 0v13M6.500 0v13M12.500 0v13M0 .500h13M0 6.500h13" stroke="#666" strokeDasharray="1 1" /><path d="M0 13h13" stroke="#555" strokeWidth="1.500" /></Draw>
            </Tool>
            <Tool $w={12} aria-label="边框选项"><Arrow /></Tool>
            <Sep />
            <Tool aria-label="填充颜色">
              <Draw w={16} h={17}><path d="M2 7l6-5 5 6-6 4z" fill="#fff" stroke="#666" /><path d="M6 0v6" stroke="#666" /><path d="M11 4c4 0 5 3 4 7l-2-3z" fill="#3b78b5" /><path d="M0 13h16v4H0z" fill="#ff0" /></Draw>
            </Tool>
            <Tool $w={12} aria-label="填充颜色选项"><Arrow /></Tool>
            <Tool aria-label="字体颜色">
              <Draw w={16} h={17}><path d="M3 11 7.500 1h1L13 11M5 8h6" stroke="#555" strokeWidth="1.900" /><path d="M0 13h16v4H0z" fill="#000" /></Draw>
            </Tool>
            <Tool $w={12} aria-label="字体颜色选项"><Arrow /></Tool>
            <Sep />
            <Tool aria-label="拼音">
              <Draw w={16} h={17}>
                <path d="M1 3l1.500 4L4 3l1.500 4L7 3M8 5h3c0-3-3-2.500-3 0s2 2 3 1.500M13 7V3M13 4c2-1.500 2.500 0 2.500 3M9 1l1-1" stroke="#555" />
                <path d="M4 10.500h9M8.500 8.500v2M6 11c1 3 3 5 6 5.500M11 11c-1 3-3 5-6 5.500" stroke="#3b78b5" strokeWidth="1.500" />
              </Draw>
            </Tool>
            <Tool $w={12} aria-label="拼音选项"><Arrow /></Tool>
          </ToolRow>
        </ToolRows>
      </GroupBody>
      <GroupFooter><GroupLabel>字体</GroupLabel><Launcher aria-label="字体选项"><LauncherIcon /></Launcher></GroupFooter>
    </Group>

    <Group $w={239}>
      <GroupBody>
        <ToolRows>
          <ToolRow>
            <Tool aria-label="顶端对齐"><Lines at={0} rows={[[1, 14], [1, 14], [1, 14]]} /></Tool>
            <Tool $on aria-label="垂直居中"><Lines at={3} rows={[[1, 14], [1, 14], [1, 14]]} /></Tool>
            <Tool aria-label="底端对齐"><Lines at={7} rows={[[1, 14], [1, 14], [1, 14]]} /></Tool>
            <Sep />
            <Tool aria-label="方向">
              <Draw w={17} h={16}>
                <g transform="rotate(-45 7 8)" stroke="#555" strokeWidth="1.400"><circle cx="4" cy="7" r="2.200" /><path d="M6.500 4.500v5M9 2v7.500" /><circle cx="11.200" cy="7" r="2.200" /></g>
                <path d="M5 15 16 5M12 5h4v4" stroke="#555" />
              </Draw>
            </Tool>
            <Tool $w={12} aria-label="方向选项"><Arrow /></Tool>
          </ToolRow>
          <ToolRow>
            <Tool aria-label="左对齐"><Lines at={1} rows={[[1, 14], [1, 9], [1, 14], [1, 9]]} /></Tool>
            <Tool $on aria-label="居中"><Lines at={1} rows={[[1, 14], [3, 10], [1, 14], [3, 10]]} /></Tool>
            <Tool aria-label="右对齐"><Lines at={1} rows={[[1, 14], [6, 9], [1, 14], [6, 9]]} /></Tool>
            <Sep />
            <Tool aria-label="减少缩进"><Indent /></Tool>
            <Tool aria-label="增加缩进"><Indent flip /></Tool>
          </ToolRow>
        </ToolRows>
        <TallSep $h={54} />
        <ToolRows>
          <TextTool>
            <IconSlot>
              <Draw w={14} h={15}>
                <circle cx="3.500" cy="4.500" r="2" stroke="#555" strokeWidth="1.300" /><path d="M6 2.500V7M8.500 0v7M4.500 10a2 2 0 1 0 0 3.500" stroke="#555" strokeWidth="1.300" /><circle cx="10.500" cy="4.500" r="2" stroke="#555" strokeWidth="1.300" />
                <path d="M12 9v3H8M9.500 10 7.500 12l2 2" stroke="#3b78b5" strokeWidth="1.200" />
              </Draw>
            </IconSlot>
            自动换行
          </TextTool>
          <TextTool>
            <IconSlot>
              <Draw w={16} h={15}><path d="M.5.500h15v14H.5zM.5 4h15M.5 11h15M8 .500V4M8 11v3.500" stroke="#666" fill="#fff" /><path d="M3 7.500h10M5 5.500l-2 2 2 2M11 5.500l2 2-2 2" stroke="#3b78b5" /></Draw>
            </IconSlot>
            合并后居中<ArrowSlot><Arrow /></ArrowSlot>
          </TextTool>
        </ToolRows>
      </GroupBody>
      <GroupFooter><GroupLabel>对齐方式</GroupLabel><Launcher aria-label="对齐选项"><LauncherIcon /></Launcher></GroupFooter>
    </Group>

    <Group $w={140}>
      <GroupBody>
        <ToolRows>
          <ToolRow><ComboBox $w={131}><select aria-label="数字格式"><option>常规</option></select><Arrow /></ComboBox></ToolRow>
          <ToolRow>
            <Tool aria-label="会计数字格式">
              <Draw w={16} h={16}><path d="M1 1h14v8H1z" fill="#fff" stroke="#3b78b5" strokeWidth="2" /><circle cx="8" cy="5" r="2" fill="#3b78b5" /><path d="M9 7h7v2H9zM9 10h7v2H9zM5 12h8v1.500H5zM6 14.500h6V16H6z" fill="#e8b565" /></Draw>
            </Tool>
            <Tool $w={12} aria-label="会计格式选项"><Arrow /></Tool>
            <Tool><Glyph $size={15} $weight={400}>%</Glyph></Tool>
            <Tool aria-label="千位分隔"><Draw w={6} h={9}><circle cx="3" cy="2.500" r="2" fill="#555" /><path d="M4.500 2c.500 3-.500 5-3 6" stroke="#555" strokeWidth="1.200" /></Draw></Tool>
            <Sep />
            <Tool aria-label="增加小数位"><Decimal up /></Tool>
            <Tool aria-label="减少小数位"><Decimal /></Tool>
          </ToolRow>
        </ToolRows>
      </GroupBody>
      <GroupFooter><GroupLabel>数字</GroupLabel><Launcher aria-label="数字选项"><LauncherIcon /></Launcher></GroupFooter>
    </Group>

    <Group $w={675}>
      <GroupBody $pad={3}>
        <BigTool $w={54}>
          <BigIcon>
            <Draw w={30} h={31}>
              <path d="M1.500 1.500h25v24h-25z" fill="#fff" />
              <path d="M8 1h7v6H8zM8 14h8v6H8z" fill="#d65f3c" /><path d="M8 8h11v6H8zM8 20h5v5H8z" fill="#3b78b5" />
              <path d="M1.500 1.500h25v24h-25zM1.500 7.500h25M1.500 13.500h25M1.500 19.500h25M8.500 1.500v24M20.500 1.500v24" stroke="#8a8a8a" />
              <path d="M14.500 17.500h14v12h-14z" fill="#fff" stroke="#666" /><path d="M18 22h7M18 25h7M24 19.500l-5 8" stroke="#333" />
            </Draw>
          </BigIcon>
          <BigLine>条件格式</BigLine>
          <BigLine><Arrow /></BigLine>
        </BigTool>
        <BigTool $w={61}>
          <BigIcon>
            <Draw w={30} h={31}>
              <path d="M1.500 3.500h23v20h-23z" fill="#fff" /><path d="M7 9h18v15H7z" fill="#bdd3ea" />
              <path d="M1.500 3.500h23v20h-23zM1.500 8.500h23M1.500 13.500h23M1.500 18.500h23M7.500 3.500v20M13.500 3.500v20M19.500 3.500v20" stroke="#8a8a8a" />
              <path d="M29 8 17 20l4 4 8-12z" fill="#777" /><path d="M17 20c-4 1-4 6-9 10 6 1 12 0 13-6z" fill="#3b78b5" />
            </Draw>
          </BigIcon>
          <BigLine>套用</BigLine>
          <BigLine>表格格式<Arrow /></BigLine>
        </BigTool>
        <Gallery>
          <GalleryGrid>
            <StyleChip $fg="#000">常规&nbsp; 2</StyleChip>
            <StyleChip $fg="#222" $bg="#fff" $variant="selected">常规</StyleChip>
            <StyleChip $fg="#9c0006" $bg="#ffc7ce">差</StyleChip>
            <StyleChip $fg="#1f7a2c" $bg="#c6efce">好</StyleChip>
            <StyleChip $fg="#9c5700" $bg="#ffeb9c">适中</StyleChip>
            <StyleChip $fg="#fa7d00" $bg="#f2f2f2" $variant="calc">计算</StyleChip>
            <StyleChip $fg="#fff" $bg="#a5a5a5" $variant="check">检查单元格</StyleChip>
            <StyleChip $fg="#7f7f7f" $variant="note">解释性文本</StyleChip>
            <StyleChip $fg="#ff0000">警告文本</StyleChip>
            <StyleChip $fg="#fa7d00" $variant="link">链接单元格</StyleChip>
          </GalleryGrid>
          <GallerySteps>
            <StepButton $off aria-label="上一行"><Draw w={5} h={3}><path d="M0 3h5L2.500 0z" fill="#b5b5b5" /></Draw></StepButton>
            <StepButton aria-label="下一行"><Arrow /></StepButton>
            <StepButton aria-label="其他样式"><Draw w={7} h={8}><path d="M0 1h7" stroke="#666" /><path d="M1 4h5L3.500 7z" fill="#666" /></Draw></StepButton>
          </GallerySteps>
        </Gallery>
      </GroupBody>
      <GroupFooter><GroupLabel>样式</GroupLabel></GroupFooter>
    </Group>

    <Group $w={135}>
      <GroupBody>
        <BigTool $w={42}><BigIcon><CellsIcon kind="insert" /></BigIcon><BigLine>插入</BigLine><BigLine><Arrow /></BigLine></BigTool>
        <BigTool $w={42}><BigIcon><CellsIcon kind="delete" /></BigIcon><BigLine>删除</BigLine><BigLine><Arrow /></BigLine></BigTool>
        <BigTool $w={42}>
          <BigIcon>
            <Draw w={30} h={31}>
              <path d="M1.500 0v6M23.500 0v6M3 3h19M6 .500 3 3l3 2.500M19 .500 22 3l-3 2.500" stroke="#3b78b5" strokeWidth="1.400" />
              <path d="M1.500 7.500h27v19h-27z" fill="#fff" stroke="#777" /><path d="M1.500 12.500h27M1.500 21.500h27M8.500 7.500v19M15.500 7.500v19M22.500 7.500v19" stroke="#999" />
              <path d="M9 13h7v8H9z" fill="#3b78b5" /><path d="M2 27v3h6l3-3M11 30h5l3-3" stroke="#777" />
            </Draw>
          </BigIcon>
          <BigLine>格式</BigLine><BigLine><Arrow /></BigLine>
        </BigTool>
      </GroupBody>
      <GroupFooter><GroupLabel>单元格</GroupLabel></GroupFooter>
    </Group>

    <Group $w={229}>
      <GroupBody>
        <SmallTools>
          <SmallTool>
            <IconSlot $w={20}><Draw w={16} h={16}><path d="M14 4V1.500H2L8 8l-6 6.500h12V12" stroke="#444" strokeWidth="2.200" /></Draw></IconSlot>
            自动求和<ArrowSlot><Arrow /></ArrowSlot>
          </SmallTool>
          <SmallTool>
            <IconSlot $w={20}><Draw w={14} h={16}><path d="M.5.500h13v15H.5z" fill="#fff" stroke="#777" /><path d="M0 0h14v4H0z" fill="#666" /><path d="M7 6v7M4 10l3 3 3-3" stroke="#3b78b5" strokeWidth="1.800" /></Draw></IconSlot>
            填充&nbsp;<Arrow />
          </SmallTool>
          <SmallTool>
            <IconSlot $w={20}><Draw w={14} h={14}><path d="M5 5l5-5 4 3-5 6z" fill="#e8798c" /><path d="M4 6l4 4-4 3-4-3z" fill="#f0a5b0" /></Draw></IconSlot>
            清除&nbsp;<Arrow />
          </SmallTool>
        </SmallTools>
        <BigTool $w={80}>
          <BigIcon>
            <Draw w={30} h={31}>
              <path d="M1.500 13 5.500 2h1l4 11M3 9.500h6" stroke="#3b78b5" strokeWidth="1.900" /><path d="M2 17.500h8L2 27h8.500" stroke="#9b5fb8" strokeWidth="2" />
              <path d="M12.500 9.500h16L22 16v10l-3-2v-8z" fill="#777" /><path d="M20.500 16v7" stroke="#f3f3f3" />
            </Draw>
          </BigIcon>
          <BigLine>排序和筛选</BigLine><BigLine><Arrow /></BigLine>
        </BigTool>
        <BigTool $w={50}>
          <BigIcon><Draw w={30} h={31}><path d="M11 20 3 29" stroke="#3b78b5" strokeWidth="4" /><circle cx="18" cy="11" r="9" fill="#fff" stroke="#3b78b5" strokeWidth="2" /></Draw></BigIcon>
          <BigLine>查找和选择</BigLine><BigLine><Arrow /></BigLine>
        </BigTool>
      </GroupBody>
      <GroupFooter><GroupLabel>编辑</GroupLabel></GroupFooter>
    </Group>
    <Collapse aria-label="折叠功能区"><Chevron /></Collapse>
  </Ribbon>
);

const TaskbarApps = () => (
  <Apps>
    <AppButton aria-label="开始">
      <Draw w={24} h={24}>
        <defs><linearGradient id="win" x1="0" y1="0" x2="1" y2="1"><stop stopColor="#4ccdf7" /><stop offset="1" stopColor="#0067c8" /></linearGradient></defs>
        <path d="M0 0h11.500v11.500H0zM12.500 0H24v11.500H12.500zM0 12.500h11.500V24H0zM12.500 12.500H24V24H12.500z" fill="url(#win)" />
      </Draw>
    </AppButton>
    <Search>
      <Draw w={16} h={16}><circle cx="7" cy="7" r="5.500" stroke="#222" strokeWidth="1.800" /><path d="M11 11l4 4" stroke="#222" strokeWidth="1.800" /></Draw>
      <input type="search" placeholder="搜索" aria-label="搜索" />
      <Draw w={48} h={28}>
        <ellipse cx="12" cy="10" rx="11" ry="6" transform="rotate(-42 12 10)" fill="#efb978" /><path d="M9 4c4-5 11-2 12 3-2 4-5 5-8 4z" fill="#dd9c58" />
        <path d="M8 6c1 4 4 6 9 7" stroke="#d94f70" strokeWidth="2" />
        <path d="M3 11c2 3 2 6 6 9M14 19l7 6M20 19l-5 7M5 16l4-2" stroke="#d94f70" strokeWidth="2.200" />
        <ellipse cx="36" cy="20" rx="11" ry="4" fill="#6b5494" /><path d="M29 4c3-2 11-2 14 0l-2 15c-3 2-7 2-10 0z" fill="#4a3a66" /><path d="M30 14c3 2 8 2 12 0v4c-3 2-8 2-11 0z" fill="#9c7fd0" />
      </Draw>
    </Search>
    <AppButton aria-label="任务视图"><Draw w={24} h={24}><path d="M0 7h17v17H0z" fill="#2b2b2b" /><path d="M7 1h17v16H7z" fill="#fafafa" /><path d="M7 7h10v10H7z" fill="#b9b9b9" /></Draw></AppButton>
    <AppButton aria-label="文件资源管理器" $bar="#6b877a">
      <Draw w={24} h={24}><path d="M0 2h9l2 3H0z" fill="#d69a12" /><path d="M0 5h24v17a1 1 0 0 1-1 1H1a1 1 0 0 1-1-1z" fill="#fdcb45" /><path d="M4 23v-4a3 3 0 0 1 3-3h10a3 3 0 0 1 3 3v4z" fill="#1479c4" /></Draw>
    </AppButton>
    <AppButton aria-label="Edge" $bar="#6b877a">
      <Draw w={24} h={24}>
        <defs><linearGradient id="edge" x1="0" y1="0" x2="1" y2=".3"><stop stopColor="#1ba1e2" /><stop offset="1" stopColor="#5fdc5a" /></linearGradient></defs>
        <path d="M0 12A12 12 0 0 1 24 11c0 4-3 6-6 6s-4-1-4-2 1-2 1-4c0-3-3-5-7-5s-7 3-8 6z" fill="url(#edge)" />
        <path d="M0 12c1-4 5-5 8-5-4 3-4 10 0 14 2 2 5 3 6 3A12 12 0 0 1 0 12z" fill="#0f5fb0" />
        <path d="M9 11c-3 6 2 11 8 11 2-.500 4-2 5-4-4 2-10 1-11-3-.500-2 0-3 1-4z" fill="#1b7fd0" />
      </Draw>
    </AppButton>
    <AppButton aria-label="Store">
      <Draw w={24} h={24}><path d="M6 7V1h12v6" stroke="#1fa5e8" strokeWidth="1.800" /><path d="M1 6h22v15a3 3 0 0 1-3 3H4a3 3 0 0 1-3-3z" fill="#164a7c" /><path d="M7 10h4.500v4.500H7z" fill="#f25022" /><path d="M12.500 10H17v4.500h-4.500z" fill="#7fba00" /><path d="M7 15.500h4.500V20H7z" fill="#00a4ef" /><path d="M12.500 15.500H17V20h-4.500z" fill="#ffb900" /></Draw>
    </AppButton>
    <AppButton aria-label="计算器" $bar="#6b877a">
      <Draw w={18} h={24}><rect width="18" height="24" rx="1" fill="#6c7884" /><path d="M2 2h14v4H2z" fill="#4ccaf7" /><path d="M2 8h4v4H2zM7 8h4v4H7zM12 8h4v4h-4zM2 13h4v4H2zM7 13h4v4H7zM2 18h4v4H2zM7 18h4v4H7z" fill="#dfe4e8" /><path d="M12 13h4v9h-4z" fill="#124a86" /></Draw>
    </AppButton>
    <AppButton aria-label="微信" $tone="#e8aaa6" $bar="#c42b1c">
      <Draw w={26} h={24}><path d="M9 1c6 0 9 4 9 8s-4 8-9 8l-5 2 1-3C-2 12-1 1 9 1z" fill="#1fc35a" /><path d="M17 8c5 0 8 3 8 7 0 3-1 4-2 5l1 3-4-2c-6 1-10-2-10-6s3-7 7-7z" fill="#f1f1f1" /><path d="M5 7h2M11 7h2M14 13h1.500M19 13h1.500" stroke="#27633c" strokeWidth="2" /></Draw>
    </AppButton>
    <AppButton aria-label="Chrome" $bar="#6b877a">
      <Draw w={24} h={24}><circle cx="12" cy="12" r="12" fill="#fbc116" /><path d="M1.600 6A12 12 0 0 1 22.400 6H12a6 6 0 0 0-5.200 9z" fill="#e33b2e" /><path d="M1.600 6A12 12 0 0 0 12 24l5.200-9A6 6 0 0 1 6.800 15z" fill="#269a48" /><circle cx="12" cy="12" r="5.500" fill="#fff" /><circle cx="12" cy="12" r="4.300" fill="#2f76ea" /></Draw>
    </AppButton>
    <AppButton aria-label="财务" $bar="#6b877a">
      <Draw w={24} h={24}><rect width="24" height="24" rx="1" fill="#2b5cff" /><path d="M7 4l5 6 5-6M6 10.500h12M6 15h12M12 10v11" stroke="#d8f5f0" strokeWidth="2" /></Draw>
    </AppButton>
    <AppButton aria-label="Excel" $tone="#e4f5ee" $bar="#0078d4">
      <Draw w={24} h={24}><path d="M12 3h11v17H12z" fill="#fff" stroke="#217346" /><path d="M14 6h3M18 6h4M14 9h3M18 9h4M14 12h3M18 12h4M14 15h3M18 15h4" stroke="#217346" strokeWidth="1.500" /><path d="M1 3l13-3v24L1 21z" fill="#1e7145" /><path d="M4.500 7.500l5 9M9.500 7.500l-5 9" stroke="#fff" strokeWidth="1.900" /></Draw>
    </AppButton>
  </Apps>
);

export default function App() {
  return (
    <Screen lang="zh-CN">
      <GlobalStyle />
      <TitleBar>
        <QuickAccess>
          <QuickButton $w={22} aria-label="保存"><Draw w={14} h={14}><path d="M1 1h12v12H1z" stroke="#fff" strokeWidth="1.600" /><path d="M3 1v5h8V1M4 13V9h6v4" stroke="#fff" strokeWidth="1.300" /><path d="M5 10h2v3H5z" fill="#fff" /></Draw></QuickButton>
          <QuickButton $w={32} aria-label="撤消"><Draw w={15} h={14}><path d="M6 1 2 5l4 4M2 5h7a4 4 0 0 1 0 8H7" stroke="#fff" strokeWidth="2" /></Draw></QuickButton>
          <Arrow color="#fff" />
          <QuickButton $w={30} $faded aria-label="恢复"><Draw w={15} h={14}><path d="M9 1l4 4-4 4M13 5H6a4 4 0 0 0 0 8h2" stroke="#fff" strokeWidth="2" /></Draw></QuickButton>
          <Arrow color="#6f9f83" />
          <QuickButton $w={28} aria-label="自定义快速访问工具栏"><Draw w={6} h={7}><path d="M0 .500h6" stroke="#fff" /><path d="M0 3h6L3 6.500z" fill="#fff" /></Draw></QuickButton>
        </QuickAccess>
        <DocTitle>{"2026 FO Duty Roster (HIEX & HI)  -  Excel"}</DocTitle>
        <WindowControls>
          <Account>Lilith Zhong</Account>
          <WindowButton aria-label="功能区显示选项"><Draw w={14} h={11}><path d="M.5.500h13v10H.5zM.5 2.500h13M7 9V4.500M5 6.500l2-2 2 2" stroke="#fff" /></Draw></WindowButton>
          <WindowButton aria-label="最小化"><Draw w={10} h={1}><path d="M0 .500h10" stroke="#fff" /></Draw></WindowButton>
          <WindowButton aria-label="还原"><Draw w={10} h={10}><path d="M.5 2.500h7v7h-7zM2.500 2.500v-2h7v7h-2" stroke="#fff" /></Draw></WindowButton>
          <WindowButton aria-label="关闭"><Draw w={11} h={11}><path d="M.5.500l10 10M10.500.500l-10 10" stroke="#fff" /></Draw></WindowButton>
        </WindowControls>
      </TitleBar>
      <TabBar>
        <Tab $file>文件</Tab>
        <Tab $active>开始</Tab>
        {["插入", "页面布局", "公式", "数据", "审阅", "视图", "帮助"].map((t) => <Tab key={t}>{t}</Tab>)}
        <TellMe><Draw w={12} h={16}><path d="M4 11.500c0-2-3-3-3-6a5 5 0 0 1 10 0c0 3-3 4-3 6zM4 13.500h4M5 15.500h2" stroke="#fff" /></Draw>告诉我你想要做什么</TellMe>
        <Share><Draw w={15} h={16}><circle cx="7" cy="5" r="4" stroke="#fff" /><path d="M.5 15c0-4 3-6 6-6M11.500 9v6M8.500 12.500h6" stroke="#fff" /></Draw>共享</Share>
      </TabBar>
      <RibbonBar />
      <FormulaBar>
        <NameBox><input aria-label="名称框" defaultValue="A13" /><Draw w={8} h={5}><path d="M0 0h8L4 5z" fill="#777" /></Draw></NameBox>
        <GripSlot><Grip><i /><i /><i /></Grip></GripSlot>
        <EntryButtons>
          <button aria-label="取消"><Draw w={11} h={10}><path d="M1 1l9 8M10 1 1 9" stroke="#bcbcbc" strokeWidth="1.800" /></Draw></button>
          <button aria-label="输入"><Draw w={13} h={10}><path d="M1 6l3 3 8-8" stroke="#bcbcbc" strokeWidth="2" /></Draw></button>
          <button><Glyph $style="italic" $size={15} $weight={600}>fx</Glyph></button>
        </EntryButtons>
        <FormulaField>
          <textarea aria-label="编辑栏" defaultValue="Lven Ding 丁相斌" />
          <button aria-label="折叠编辑栏"><Chevron /></button>
        </FormulaField>
      </FormulaBar>
      <SheetArea>
        <Worksheet />
        <VScroll>
          <ScrollButton aria-label="向上滚动"><Draw w={7} h={4}><path d="M0 4h7L3.500 0z" fill="#666" /></Draw></ScrollButton>
          <VTrack><VThumb /></VTrack>
          <ScrollButton aria-label="向下滚动"><Draw w={7} h={4}><path d="M0 0h7L3.500 4z" fill="#666" /></Draw></ScrollButton>
        </VScroll>
      </SheetArea>
      <SheetTabs>
        <TabNav>
          <button aria-label="上一张"><Draw w={5} h={8}><path d="M5 0v8L0 4z" fill="#b5b5b5" /></Draw></button>
          <button aria-label="下一张"><Draw w={5} h={8}><path d="M0 0v8l5-4z" fill="#b5b5b5" /></Draw></button>
        </TabNav>
        <SheetTab $active>1月</SheetTab>
        <SheetTab>2月</SheetTab>
        <AddSheet aria-label="新工作表"><Draw w={17} h={17}><circle cx="8.500" cy="8.500" r="7.500" stroke="#777" /><path d="M8.500 4.500v8M4.500 8.500h8" stroke="#666" strokeWidth="2" /></Draw></AddSheet>
        <HScroll>
          <GripSlot><Grip><i /><i /><i /></Grip></GripSlot>
          <ScrollButton aria-label="向左滚动"><Draw w={4} h={7}><path d="M4 0v7L0 3.500z" fill="#666" /></Draw></ScrollButton>
          <HTrack><HThumb /></HTrack>
          <ScrollButton aria-label="向右滚动"><Draw w={4} h={7}><path d="M0 0v7l4-3.500z" fill="#666" /></Draw></ScrollButton>
        </HScroll>
      </SheetTabs>
      <StatusBar>
        <Ready>就绪</Ready>
        <Stat>平均值: 6167125912</Stat>
        <Stat>计数: 38</Stat>
        <Stat>求和: 18501377736</Stat>
        <ViewButton $on aria-label="普通"><Draw w={13} h={13}><path d="M.5.500h12v12H.5zM.5 4.500h12M.5 8.500h12M4.500.500v12M8.500.500v12" stroke="#666" /></Draw></ViewButton>
        <ViewButton aria-label="页面布局"><Draw w={13} h={13}><path d="M.5.500h12v12H.5zM3.500 2.500h6v8h-6zM5 4.500h3M5 6.500h3M5 8.500h3" stroke="#666" /></Draw></ViewButton>
        <ViewButton aria-label="分页预览"><Draw w={13} h={13}><path d="M.5.500h12v12H.5zM4.500.500v8M8.500.500v8M.5 8.500h8" stroke="#666" /></Draw></ViewButton>
        <Zoom>
          <button aria-label="缩小">-</button>
          <input type="range" aria-label="缩放" min={10} max={200} defaultValue={80} />
          <button aria-label="放大">+</button>
          <output>80%</output>
        </Zoom>
      </StatusBar>
      <Taskbar>
        <Weather>
          <Cloud><Draw w={34} h={18}><path d="M9 17a5.500 5.500 0 0 1 0-10C10 2 14 0 18 1c3 1 5 3 5 5 4-1 8 1 8 6 0 3-2 5-5 5z" fill="#8fb2f0" /><path d="M9 17a5.500 5.500 0 0 1 2-10c4 0 6 2 7 4 3-1 6-1 8 0l-2 6z" fill="#b7cff8" /></Draw></Cloud>
          <Stack><span>12°C</span><span>阴</span></Stack>
        </Weather>
        <TaskbarApps />
        <Tray>
          <TrayButton $w={32} aria-label="显示隐藏的图标"><Draw w={11} h={7}><path d="M.5 6l5-5 5 5" stroke="#222" strokeWidth="1.400" /></Draw></TrayButton>
          <TrayButton $w={32} aria-label="更新"><Draw w={18} h={18}><path d="M2 8a7 7 0 0 1 12-4M15 1v4h-4M6 16H2v-4M2 16l-1-1" stroke="#222" strokeWidth="1.400" /><circle cx="13" cy="13" r="4.500" fill="#0078d4" /></Draw></TrayButton>
          <TrayButton $w={32}>中</TrayButton>
          <TrayButton $w={44}>拼</TrayButton>
          <TrayButton $w={30} aria-label="网络"><Draw w={17} h={16}><path d="M11 1.500H1.500v10h11V9M4 15.500h7M7.500 11.500v4" stroke="#222" strokeWidth="1.200" /><path d="M12.500 1.500h3v5h-3zM14 6.500V15" stroke="#222" strokeWidth="1.200" /></Draw></TrayButton>
          <TrayButton $w={24} aria-label="音量"><Draw w={17} h={14}><path d="M1 5h2l4-4v12L3 9H1zM9.500 5c1 1 1 3 0 4M12 3c2 2 2 6 0 8M14 1c3 3 3 9 0 12" stroke="#222" /></Draw></TrayButton>
          <Clock><span>14:55</span><span>2025/12/16</span></Clock>
        </Tray>
      </Taskbar>
    </Screen>
  );
}
